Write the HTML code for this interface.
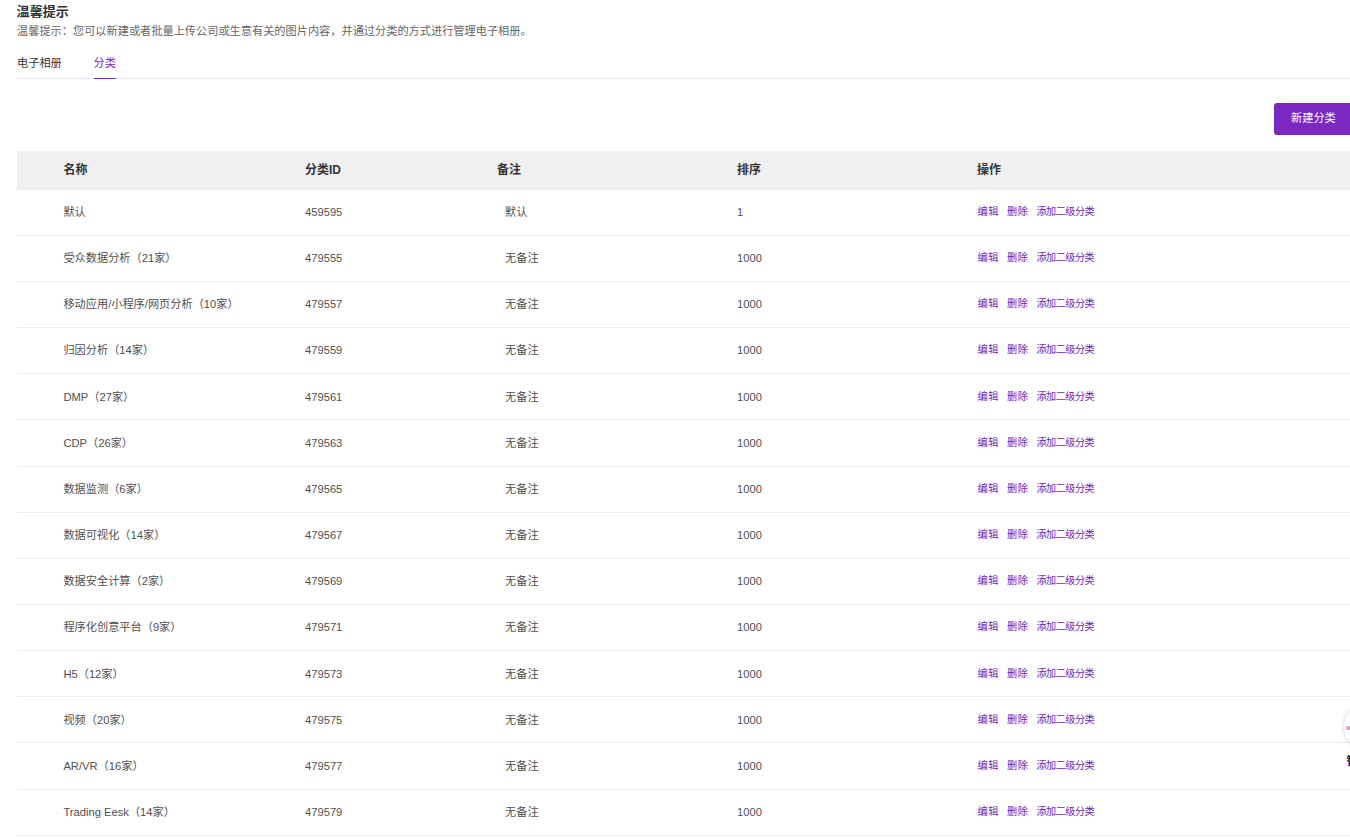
<!DOCTYPE html><html lang="zh-CN"><head><meta charset="utf-8"><title>分类</title><style>
*{box-sizing:border-box;margin:0;padding:0}
html,body{width:1350px;height:837px;overflow:hidden;background:#fff}
body{font-family:"Liberation Sans","Noto Sans CJK SC",sans-serif;color:#505050;font-size:11.19px;position:relative}
.title{position:absolute;left:16.6px;top:2.7px;font-size:13.05px;font-weight:bold;color:#333;line-height:18px;white-space:nowrap}
.sub{position:absolute;left:17px;top:22.3px;font-size:11.19px;color:#666;line-height:18px;white-space:nowrap}
.tabs{position:absolute;left:17px;top:46px;width:1340px;height:33px;border-bottom:1px solid #e6e9f0}
.tab{position:absolute;top:0;height:33px;line-height:34.8px;font-size:11.19px;color:#333;white-space:nowrap}
.tab.on{color:#7b28c2}
.ul{position:absolute;left:76px;top:32px;width:24px;height:1px;background:#7b28c2;border-left:1px solid #fff;border-right:1px solid #fff}
.btn{position:absolute;left:1274px;top:103px;width:80px;height:32px;border-radius:3px;background:#7b28c2;color:#fff;font-size:11.19px;line-height:31px;padding-left:17px;white-space:nowrap}
.thead{position:absolute;left:17px;top:151px;width:1340px;height:39px;background:#f0f0f0;border-bottom:1px solid #e9ecf3;font-weight:bold;color:#333;font-size:12px;line-height:38px}
.ln{position:absolute;left:17px;width:1340px;height:1px;background:#e9ecf3}
.row{position:absolute;left:17px;width:1340px;height:46.15px;line-height:45px;color:#505050}
.c{position:absolute;top:0;white-space:nowrap}
.c1{left:46.4px}.c2{left:288px}.c3{left:480px}.c4{left:720px}.c5{left:960px}
.row .c3{left:488px}
.row .c5{font-size:10.15px;color:#6c1cbb;top:-1px;left:960.4px}
.row .c5 span{position:absolute;top:0;left:0;letter-spacing:.7px}
.row .c5 span.s2{left:29.5px}
.row .c5 span.s3{left:59.1px;letter-spacing:-.5px}
.fab{position:absolute;left:1344px;top:705px;width:44px;height:44px;border-radius:50%;background:#fff;box-shadow:0 0 5px rgba(0,0,50,.2)}
.fab i{position:absolute;left:2px;top:20.5px;width:10px;height:4px;border-radius:2px;background:#e3a2b5}
.fabt{position:absolute;left:1346.6px;top:752px;font-size:11.19px;color:#111;font-weight:bold;line-height:18px;white-space:nowrap}
</style></head><body>
<div class="title">温馨提示</div>
<div class="sub">温馨提示：您可以新建或者批量上传公司或生意有关的图片内容，并通过分类的方式进行管理电子相册。</div>
<div class="tabs"><div class="tab" style="left:0">电子相册</div><div class="tab on" style="left:76.5px">分类</div><i class="ul"></i></div>
<div class="btn">新建分类</div>
<div class="thead"><div class="c c1">名称</div><div class="c c2">分类ID</div><div class="c c3">备注</div><div class="c c4">排序</div><div class="c c5">操作</div></div>
<div class="row" style="top:190.00px"><div class="c c1">默认</div><div class="c c2">459595</div><div class="c c3">默认</div><div class="c c4">1</div><div class="c c5"><span class="s1">编辑</span><span class="s2">删除</span><span class="s3">添加二级分类</span></div></div>
<div class="row" style="top:236.15px"><div class="c c1">受众数据分析（21家）</div><div class="c c2">479555</div><div class="c c3">无备注</div><div class="c c4">1000</div><div class="c c5"><span class="s1">编辑</span><span class="s2">删除</span><span class="s3">添加二级分类</span></div></div>
<div class="row" style="top:282.30px"><div class="c c1">移动应用/小程序/网页分析（10家）</div><div class="c c2">479557</div><div class="c c3">无备注</div><div class="c c4">1000</div><div class="c c5"><span class="s1">编辑</span><span class="s2">删除</span><span class="s3">添加二级分类</span></div></div>
<div class="row" style="top:328.45px"><div class="c c1">归因分析（14家）</div><div class="c c2">479559</div><div class="c c3">无备注</div><div class="c c4">1000</div><div class="c c5"><span class="s1">编辑</span><span class="s2">删除</span><span class="s3">添加二级分类</span></div></div>
<div class="row" style="top:374.60px"><div class="c c1">DMP（27家）</div><div class="c c2">479561</div><div class="c c3">无备注</div><div class="c c4">1000</div><div class="c c5"><span class="s1">编辑</span><span class="s2">删除</span><span class="s3">添加二级分类</span></div></div>
<div class="row" style="top:420.75px"><div class="c c1">CDP（26家）</div><div class="c c2">479563</div><div class="c c3">无备注</div><div class="c c4">1000</div><div class="c c5"><span class="s1">编辑</span><span class="s2">删除</span><span class="s3">添加二级分类</span></div></div>
<div class="row" style="top:466.90px"><div class="c c1">数据监测（6家）</div><div class="c c2">479565</div><div class="c c3">无备注</div><div class="c c4">1000</div><div class="c c5"><span class="s1">编辑</span><span class="s2">删除</span><span class="s3">添加二级分类</span></div></div>
<div class="row" style="top:513.05px"><div class="c c1">数据可视化（14家）</div><div class="c c2">479567</div><div class="c c3">无备注</div><div class="c c4">1000</div><div class="c c5"><span class="s1">编辑</span><span class="s2">删除</span><span class="s3">添加二级分类</span></div></div>
<div class="row" style="top:559.20px"><div class="c c1">数据安全计算（2家）</div><div class="c c2">479569</div><div class="c c3">无备注</div><div class="c c4">1000</div><div class="c c5"><span class="s1">编辑</span><span class="s2">删除</span><span class="s3">添加二级分类</span></div></div>
<div class="row" style="top:605.35px"><div class="c c1">程序化创意平台（9家）</div><div class="c c2">479571</div><div class="c c3">无备注</div><div class="c c4">1000</div><div class="c c5"><span class="s1">编辑</span><span class="s2">删除</span><span class="s3">添加二级分类</span></div></div>
<div class="row" style="top:651.50px"><div class="c c1">H5（12家）</div><div class="c c2">479573</div><div class="c c3">无备注</div><div class="c c4">1000</div><div class="c c5"><span class="s1">编辑</span><span class="s2">删除</span><span class="s3">添加二级分类</span></div></div>
<div class="row" style="top:697.65px"><div class="c c1">视频（20家）</div><div class="c c2">479575</div><div class="c c3">无备注</div><div class="c c4">1000</div><div class="c c5"><span class="s1">编辑</span><span class="s2">删除</span><span class="s3">添加二级分类</span></div></div>
<div class="row" style="top:743.80px"><div class="c c1">AR/VR（16家）</div><div class="c c2">479577</div><div class="c c3">无备注</div><div class="c c4">1000</div><div class="c c5"><span class="s1">编辑</span><span class="s2">删除</span><span class="s3">添加二级分类</span></div></div>
<div class="row" style="top:789.95px"><div class="c c1">Trading Eesk（14家）</div><div class="c c2">479579</div><div class="c c3">无备注</div><div class="c c4">1000</div><div class="c c5"><span class="s1">编辑</span><span class="s2">删除</span><span class="s3">添加二级分类</span></div></div>
<div class="ln" style="top:235px"></div>
<div class="ln" style="top:281px"></div>
<div class="ln" style="top:327px"></div>
<div class="ln" style="top:373px"></div>
<div class="ln" style="top:419px"></div>
<div class="ln" style="top:466px"></div>
<div class="ln" style="top:512px"></div>
<div class="ln" style="top:558px"></div>
<div class="ln" style="top:604px"></div>
<div class="ln" style="top:650px"></div>
<div class="ln" style="top:696px"></div>
<div class="ln" style="top:742px"></div>
<div class="ln" style="top:789px"></div>
<div class="ln" style="top:835px"></div>
<div class="fab"><i></i></div><div class="fabt">智能客服</div>
</body></html>
